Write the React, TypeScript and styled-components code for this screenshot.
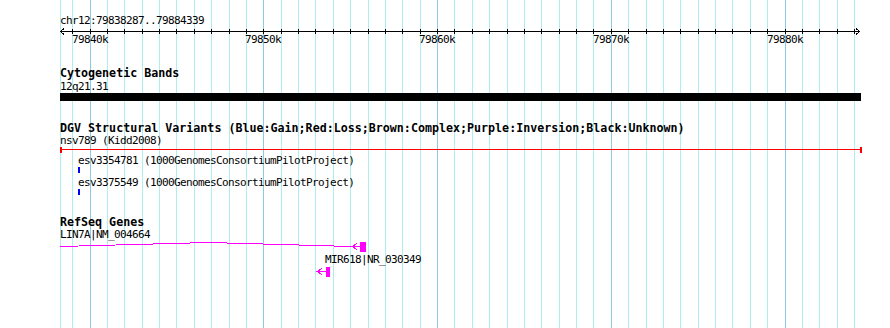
import React from 'react'
import styled, { createGlobalStyle } from 'styled-components'

const VIEW_START = 79838287
const VIEW_END = 79884339
const ORIGIN = 60 // left edge of the panel
const PANEL_W = 802

// pixel column for a genomic position (79840k sits at x=90, 10k = 173.75px)
const px = (pos: number) => Math.floor(90 + (pos - 79840000) * 0.017375)
const rel = (pos: number) => px(pos) - ORIGIN

const kiloTicks: number[] = []
for (let k = 79839; k <= 79884; k++) kiloTicks.push(k)

interface Variant {
    name: string
    source: string
    start: number
    end: number
}

const variants: Variant[] = [
    { name: 'esv3354781', source: '1000GenomesConsortiumPilotProject', start: 79839320, end: 79839440 },
    { name: 'esv3375549', source: '1000GenomesConsortiumPilotProject', start: 79839320, end: 79839440 },
]

const MAGENTA = '#ff00ff'

const GlobalStyle = createGlobalStyle`
    html, body {
        margin: 0;
        padding: 0;
        background: #fff;
    }
    body {
        width: 890px;
        height: 328px;
        overflow: hidden;
    }
`

const App = () => {
    const lin7aExon = { start: 79855540, end: 79855900 }
    const mir618 = { start: 79853640, end: 79853820 }
    const exonX = rel(lin7aExon.start)
    const mirX = rel(mir618.start)

    return (
        <Canvas>
            <GlobalStyle />
            <GridLayer>
                <GridLine style={{ left: ORIGIN }} />
                {kiloTicks.map(k => (
                    <GridLine key={k} $major={k % 10 === 0} style={{ left: px(k * 1000) }} />
                ))}
            </GridLayer>

            <Tracks>
                {/* ruler */}
                <RangeLabel>chr12:{VIEW_START}..{VIEW_END}</RangeLabel>
                <Glyph width={PANEL_W} height={7}>
                    <line x1={0} y1={4.5} x2={800} y2={4.5} stroke="#000" />
                    <polyline points="4,1.5 0.5,4.5 4,7.5" fill="none" stroke="#000" />
                    <polyline points="796,1.5 799.5,4.5 796,7.5" fill="none" stroke="#000" />
                    {kiloTicks.map(k => {
                        const x = rel(k * 1000) + 0.5
                        return <line key={k} x1={x} y1={2} x2={x} y2={7} stroke="#000" />
                    })}
                </Glyph>
                <TickLabels>
                    {kiloTicks.filter(k => k % 10 === 0).map(k => (
                        <TickLabel key={k} style={{ left: rel(k * 1000) }}>{k}k</TickLabel>
                    ))}
                </TickLabels>

                {/* cytogenetic bands */}
                <TrackTitle $gap={21}>Cytogenetic Bands</TrackTitle>
                <FeatureLabel $gap={1}>12q21.31</FeatureLabel>
                <BandBar />

                {/* DGV */}
                <TrackTitle $gap={21}>DGV Structural Variants (Blue:Gain;Red:Loss;Brown:Complex;Purple:Inversion;Black:Unknown)</TrackTitle>
                <FeatureLabel>nsv789 (Kidd2008)</FeatureLabel>
                <Glyph width={PANEL_W} height={6}>
                    <line x1={0} y1={2.5} x2={801} y2={2.5} stroke="#ff0000" />
                    <rect x={0} y={0} width={2} height={6} fill="#ff0000" />
                    <rect x={800} y={0} width={2} height={6} fill="#ff0000" />
                </Glyph>
                {variants.map((v, i) => (
                    <React.Fragment key={v.name}>
                        <FeatureLabel $gap={i === 0 ? 2 : 4} style={{ marginLeft: rel(v.start) }}>
                            {v.name} ({v.source})
                        </FeatureLabel>
                        <Glyph width={PANEL_W} height={6}>
                            <rect x={rel(v.start)} y={0} width={Math.max(2, px(v.end) - px(v.start))} height={6} fill="#0000ff" />
                        </Glyph>
                    </React.Fragment>
                ))}

                {/* RefSeq */}
                <TrackTitle $gap={21}>RefSeq Genes</TrackTitle>
                <FeatureLabel>LIN7A|NM_004664</FeatureLabel>
                <Glyph width={PANEL_W} height={11}>
                    <polyline points={`0,5.5 149,1.5 ${exonX - 8},5.5 ${exonX},5.5`} fill="none" stroke={MAGENTA} />
                    <polyline points={`${exonX - 3},2.5 ${exonX - 8},5.5 ${exonX - 3},8.5`} fill="none" stroke={MAGENTA} />
                    <rect x={exonX} y={1} width={px(lin7aExon.end) - px(lin7aExon.start)} height={10} fill={MAGENTA} />
                </Glyph>
                <FeatureLabel $gap={2} style={{ marginLeft: mirX - 1 }}>MIR618|NR_030349</FeatureLabel>
                <Glyph width={PANEL_W} height={11}>
                    <line x1={mirX - 9} y1={5.5} x2={mirX} y2={5.5} stroke={MAGENTA} />
                    <polyline points={`${mirX - 4},2.5 ${mirX - 9},5.5 ${mirX - 4},8.5`} fill="none" stroke={MAGENTA} />
                    <rect x={mirX} y={1} width={px(mir618.end) - px(mir618.start)} height={10} fill={MAGENTA} />
                </Glyph>
            </Tracks>
        </Canvas>
    )
}

export default App

const Canvas = styled.div`
    position: relative;
    width: 890px;
    height: 328px;
    overflow: hidden;
    background: #fff;
    color: #000;
    font-family: "DejaVu Sans Mono", "Liberation Mono", monospace;
`

const GridLayer = styled.div`
    position: absolute;
    inset: 0;
`

const GridLine = styled.div<{ $major?: boolean }>`
    position: absolute;
    top: 0;
    bottom: 0;
    width: 1px;
    background: ${p => (p.$major ? '#8ccbe6' : '#aeeef0')};
`

const Tracks = styled.div`
    position: relative;
    display: flex;
    flex-direction: column;
    align-items: flex-start;
    padding-left: ${ORIGIN}px;
`

const FeatureLabel = styled.div<{ $gap?: number }>`
    margin-top: ${p => p.$gap || 0}px;
    height: 12px;
    font-size: 11px;
    letter-spacing: -0.62px;
    line-height: 12px;
    white-space: pre;
`

const RangeLabel = styled(FeatureLabel)`
    margin-top: 15px;
`

const TrackTitle = styled.div<{ $gap: number }>`
    margin-top: ${p => p.$gap}px;
    height: 13px;
    font-size: 11.67px;
    font-weight: bold;
    line-height: 13px;
    white-space: pre;
`

const Glyph = styled.svg`
    display: block;
    overflow: visible;
    shape-rendering: crispEdges;
`

const TickLabels = styled.div`
    position: relative;
    width: ${PANEL_W}px;
    height: 12px;
`

const TickLabel = styled.span`
    position: absolute;
    top: 0;
    transform: translateX(-50%);
    font-size: 11px;
    letter-spacing: -0.62px;
    line-height: 12px;
    white-space: pre;
`

const BandBar = styled.div`
    width: 801px;
    height: 8px;
    background: #000;
`
